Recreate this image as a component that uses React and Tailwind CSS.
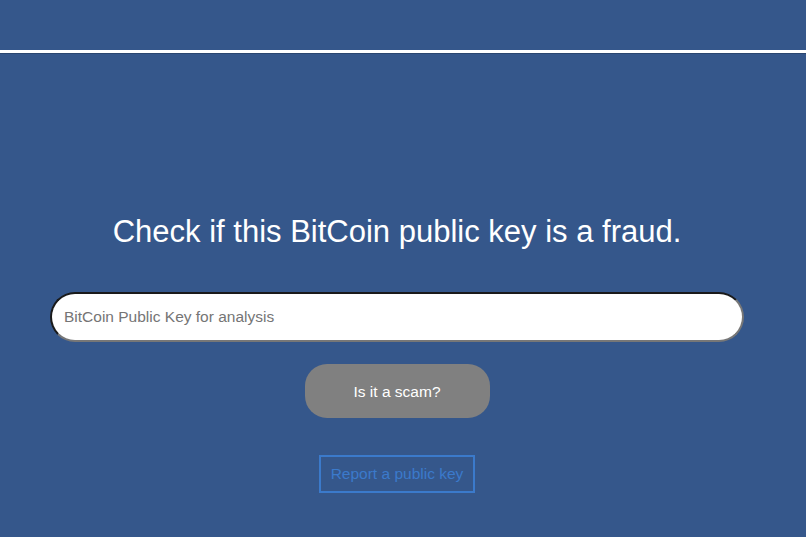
import React from 'react';

export default function App() {
  return (
    <div className="min-h-[537px] w-full bg-[#35578b] font-['Liberation_Sans',Arial,sans-serif] overflow-hidden">
      <div className="h-[50px]" />
      <div className="h-[3px] bg-white border-b border-[#2a4670] box-content" />
      <div className="w-[794px] flex flex-col items-center">
        <h1 className="mt-[159px] text-[31px] leading-[37px] text-white">
          Check if this BitCoin public key is a fraud.
        </h1>
        <input
          type="text"
          placeholder="BitCoin Public Key for analysis"
          className="mt-[42px] w-[694px] h-[50px] rounded-full bg-white px-[12px] text-[15.5px] text-black placeholder:text-[#757575] border-2 border-t-[#1a1a1a] border-l-[#1a1a1a] border-b-[#777] border-r-[#777] outline-none"
        />
        <button className="mt-[22px] w-[185px] h-[54px] rounded-[22px] bg-[#808080] text-white text-[15.5px] pt-[2px]">
          Is it a scam?
        </button>
        <a className="mt-[37px] h-[38px] px-[10px] flex items-center border-2 border-[#3b7acb] text-[#3b7acb] text-[15.5px]">
          Report a public key
        </a>
      </div>
    </div>
  );
}
